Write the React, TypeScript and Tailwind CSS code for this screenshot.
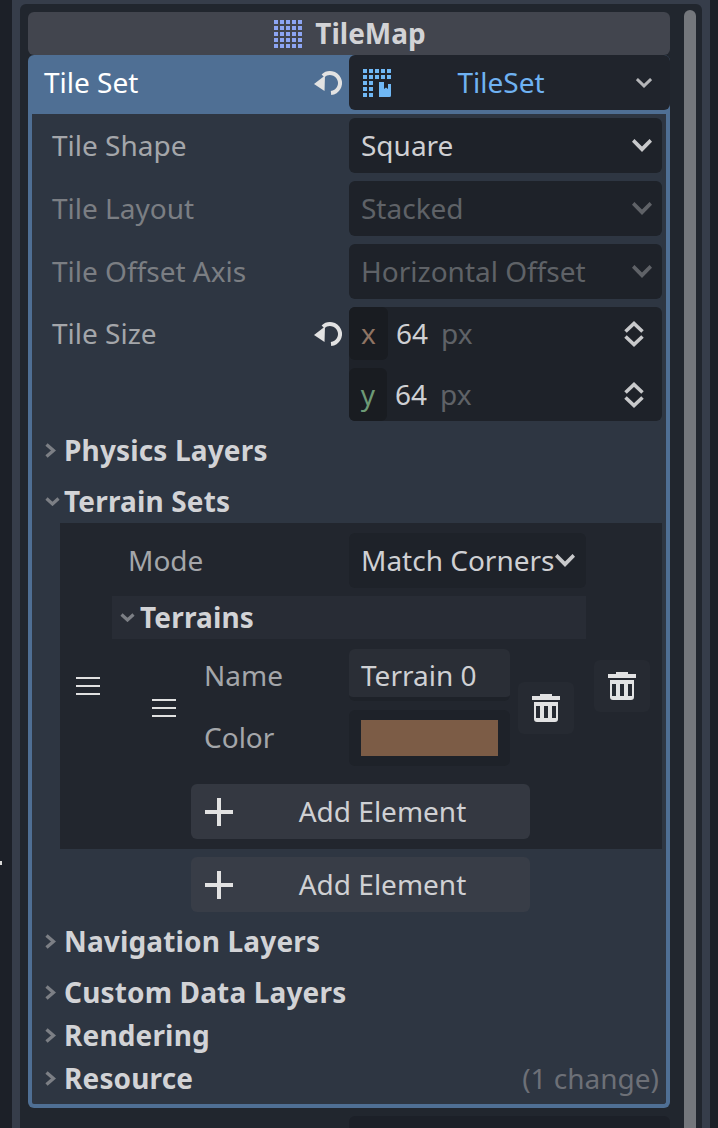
import React from "react";

const Chevron = ({ className = "" }: { className?: string }) => (
  <svg viewBox="0 0 20 12" preserveAspectRatio="none" className={className} fill="none" stroke="currentColor" strokeWidth={3.6} strokeLinecap="square">
    <path d="M2.500 2.500 10 9.500 17.500 2.500" />
  </svg>
);

const ChevronRight = () => (
  <svg viewBox="0 0 11 15" className="w-[11px] h-[15px] text-[#7c7f85]" fill="none" stroke="currentColor" strokeWidth={3.4}>
    <path d="M1.500 1.500 8.500 7.500 1.500 13.500" />
  </svg>
);

const ChevronDownSmall = () => (
  <svg viewBox="0 0 15 9" className="w-[15px] h-[9px] text-[#7c7f85]" fill="none" stroke="currentColor" strokeWidth={3.2}>
    <path d="M1.500 1.500 7.500 7 13.500 1.500" />
  </svg>
);

const ResetIcon = () => (
  <svg viewBox="0 0 28 28" className="w-7 h-7 text-[#e2e2e2]" fill="none">
    <path d="M9 6.900A10 10 0 1 1 17 24" stroke="currentColor" strokeWidth={4} />
    <path d="M0 15 11 6.500 10.500 22Z" fill="currentColor" />
  </svg>
);

const GridIcon = () => (
  <svg viewBox="0 0 28 28" className="w-7 h-7 text-[#8da5f3]" fill="currentColor">
    {[0, 6, 12, 18, 24].map((y) =>
      [0, 6, 12, 18, 24].map((x) => <rect key={`${x}-${y}`} x={x} y={y} width={4} height={4} />)
    )}
  </svg>
);

const TileSetIcon = () => (
  <svg viewBox="0 0 28 28" className="w-7 h-7 text-[#70b8f5]" fill="currentColor">
    {[0, 6, 12, 18, 24].map((y) =>
      [0, 6, 12, 18, 24].map((x) =>
        x >= 12 && y >= 12 ? null : <rect key={`${x}-${y}`} x={x} y={y} width={4} height={4} />
      )
    )}
    <path d="M16 13h5v7l2-1.500 2 1.500v-5h3v11.500a1.500 1.500 0 0 1-1.500 1.500H16Z" />
  </svg>
);

const Spinner = () => (
  <svg viewBox="0 0 20 28" className="w-5 h-7 text-[#c8c9cb]" fill="none" stroke="currentColor" strokeWidth={3.6}>
    <path d="M1.500 11.500 10 3.500 18.500 11.500" />
    <path d="M1.500 16.500 10 24.500 18.500 16.500" />
  </svg>
);

const Hamburger = () => (
  <div className="w-6 flex flex-col gap-[6px]">
    <div className="h-[2px] bg-[#e0e0e0]" />
    <div className="h-[2px] bg-[#e0e0e0]" />
    <div className="h-[2px] bg-[#e0e0e0]" />
  </div>
);

const TrashButton = ({ className = "" }: { className?: string }) => (
  <div className={`w-14 h-[52px] rounded-md bg-[#262a32] flex items-center justify-center ${className}`}>
    <svg viewBox="0 0 28 28" className="w-7 h-7 text-[#e2e2e3]" fill="currentColor">
      <path d="M8 0h12v2h8v4H0V2h8Z" />
      <path fillRule="evenodd" d="M2 8h24v17a3 3 0 0 1-3 3H5a3 3 0 0 1-3-3ZM4 12v12h4V12Zm8 0v12h4V12Zm8 0v12h4V12Z" />
    </svg>
  </div>
);

const Select = ({ text, disabled }: { text: string; disabled?: boolean }) => (
  <div className="w-[313px] h-[55px] rounded-md bg-[#1e2229] flex items-center justify-between pl-3 pr-[10px]">
    <span className={`mb-[2px] ${disabled ? "text-[#5f6267]" : "text-[#cfd0d3]"}`}>{text}</span>
    <Chevron className={`w-5 h-[13px] ${disabled ? "text-[#5f6267]" : "text-[#c8c9cb]"}`} />
  </div>
);

const PropRow = ({ label, disabled, text }: { label: string; disabled?: boolean; text: string }) => (
  <div className="flex items-center mb-2">
    <div className={`w-[317px] pl-5 mb-[2px] ${disabled ? "text-[#7b7e83]" : "text-[#a4a6aa]"}`}>{label}</div>
    <Select text={text} disabled={disabled} />
  </div>
);

const SizeField = ({ axis, chip, chipW }: { axis: string; chip: string; chipW: string }) => (
  <div className="h-[53px] flex items-center pr-[18px]">
    <div className={`${chipW} h-full pb-[2px] rounded-md bg-[#191c21] flex items-center justify-center ${chip}`}>{axis}</div>
    <span className="ml-2 mb-[2px] text-[#cfd0d3]">64</span>
    <span className="ml-[13px] mb-[2px] text-[#5f6267]">px</span>
    <div className="ml-auto">
      <Spinner />
    </div>
  </div>
);

const SectionRow = ({ label, open, extra, className = "" }: { label: string; open?: boolean; extra?: string; className?: string }) => (
  <div className={`h-[43px] flex items-center font-bold text-[#d2d3d6] ${className}`}>
    <div className="w-[32px] flex items-center pl-[13px]">
      {open ? <ChevronDownSmall /> : <ChevronRight />}
    </div>
    <span className="mb-[2px] tracking-[0.15px]">{label}</span>
    {extra && <span className="ml-auto mb-[2px] pr-[7px] font-normal text-[#6d7077]">{extra}</span>}
  </div>
);

const AddButton = ({ className = "" }: { className?: string }) => (
  <div className={`w-[339px] h-[55px] rounded-md flex items-center pl-[14px] text-[#cfd0d3] ${className}`}>
    <svg viewBox="0 0 28 28" className="w-7 h-7 text-[#e2e2e2]" fill="currentColor">
      <path d="M12 0h4v12h12v4H16v12h-4V16H0v-4h12Z" />
    </svg>
    <span className="flex-1 ml-[2px] mb-[2px] text-center">Add Element</span>
  </div>
);

export default function App() {
  return (
    <div className="w-[718px] h-[1128px] overflow-hidden flex bg-[#1c2028] text-[28px] leading-none font-['Noto_Sans',sans-serif]">
      <div className="w-3 shrink-0">
        <div className="mt-[861px] w-[2px] h-1 bg-[#d8d8d8]" />
      </div>
      <div className="flex-1 bg-[#363d4a] px-2 pt-1">
        <div className="h-full rounded-t-md bg-[#21262e] pl-2 flex">
          <div className="w-[642px] pt-2">
            <div className="h-[43px] pl-[2px] rounded-md bg-[#42454e] flex items-center justify-center gap-[13px] font-bold text-[#d2d3d6]">
              <GridIcon />
              <span className="mb-[2px]">TileMap</span>
            </div>
            <div className="h-[59px] flex rounded-t-md bg-[#4f6f94]">
              <div className="w-[321px] h-[55px] flex items-center justify-between pl-4 pr-[7px] text-white">
                <span className="mb-[2px]">Tile Set</span>
                <ResetIcon />
              </div>
              <div className="w-[321px] h-[55px] rounded-md bg-[#20242c] flex items-center pl-[14px] pr-[18px]">
                <TileSetIcon />
                <span className="flex-1 mr-[25px] mb-[2px] text-center text-[#6fb2f2]">TileSet</span>
                <Chevron className="w-4 h-[10px] text-[#b5b6b9]" />
              </div>
            </div>
            <div className="h-[994px] border-x-4 border-b-4 border-[#4f6f94] rounded-b-md bg-[#2e3642] pt-1">
              <PropRow label="Tile Shape" text="Square" />
              <PropRow label="Tile Layout" text="Stacked" disabled />
              <PropRow label="Tile Offset Axis" text="Horizontal Offset" disabled />
              <div className="flex">
                <div className="w-[317px] h-[53px] pl-5 pr-[7px] flex items-center justify-between text-[#a4a6aa]">
                  <span className="mb-[2px]">Tile Size</span>
                  <ResetIcon />
                </div>
                <div className="w-[313px] h-[114px] rounded-md bg-[#1e2229] flex flex-col gap-2">
                  <SizeField axis="x" chip="text-[#8f7464]" chipW="w-[39px]" />
                  <SizeField axis="y" chip="text-[#6d9a76]" chipW="w-[38px]" />
                </div>
              </div>
              <SectionRow label="Physics Layers" className="mt-2" />
              <SectionRow label="Terrain Sets" open className="mt-2" />
              <div className="ml-7 w-[602px] h-[326px] bg-[#22262e] flex items-center pl-4">
                <Hamburger />
                <div className="ml-3 w-[474px]">
                  <div className="flex items-center pl-[16px]">
                    <div className="w-[221px] mb-[2px] text-[#a4a6aa]">Mode</div>
                    <div className="w-[237px] h-[55px] rounded-md bg-[#1e2229] flex items-center pl-3 text-[#cfd0d3]">
                      <span className="mb-[2px]">Match Corners</span>
                      <Chevron className="w-5 h-[13px] text-[#c8c9cb]" />
                    </div>
                  </div>
                  <div className="mt-2 h-[43px] bg-[#282c35] flex items-center font-bold text-[#d2d3d6]">
                    <div className="ml-2 mr-[5px] w-[15px]">
                      <ChevronDownSmall />
                    </div>
                    <span className="mb-[2px] tracking-[0.15px]">Terrains</span>
                  </div>
                  <div className="mt-[10px] flex items-center pl-10">
                    <Hamburger />
                    <div className="ml-[28px] w-[145px] mb-1 flex flex-col gap-[34px] text-[#a4a6aa]">
                      <span>Name</span>
                      <span>Color</span>
                    </div>
                    <div className="w-[161px] flex flex-col gap-[9px]">
                      <div className="h-[52px] pt-1 rounded-md bg-[#2a2e36] border-b-4 border-[#1e2229] flex items-center pl-3 text-[#cfd0d3]">
                        Terrain 0
                      </div>
                      <div className="h-[56px] rounded-md bg-[#1e2229] flex items-center justify-center">
                        <div className="w-[137px] h-9 bg-[#7c5c46]" />
                      </div>
                    </div>
                    <TrashButton className="ml-2" />
                  </div>
                  <AddButton className="mt-[18px] ml-[79px] bg-[#343841]" />
                </div>
                <TrashButton className="ml-2" />
              </div>
              <AddButton className="mt-2 ml-[159px] bg-[#383d47]" />
              <SectionRow label="Navigation Layers" className="mt-2" />
              <SectionRow label="Custom Data Layers" className="mt-2" />
              <SectionRow label="Rendering" />
              <SectionRow label="Resource" extra="(1 change)" />
            </div>
            <div className="mt-2 ml-[321px] w-[321px] h-[55px] rounded-md bg-[#1c2028]" />
          </div>
          <div className="ml-[14px] mt-[6px] w-3 h-[1200px] rounded-full bg-[#74777c]" />
        </div>
      </div>
      <div className="w-2 shrink-0" />
    </div>
  );
}
